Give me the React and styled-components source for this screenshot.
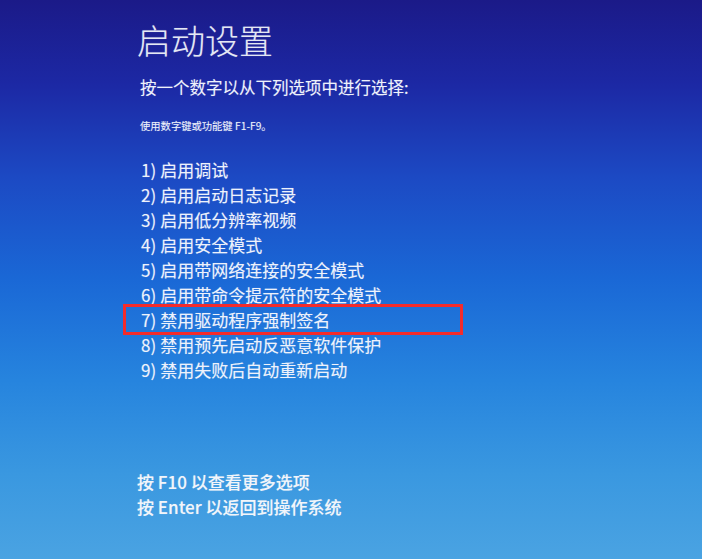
import React from "react";
import styled, { createGlobalStyle } from "styled-components";

const Global = createGlobalStyle`
  html, body { margin: 0; padding: 0; }
  body { font-family: "Noto Sans CJK SC", "Noto Sans", sans-serif; }
`;

const Screen = styled.div`
  width: 702px;
  height: 559px;
  box-sizing: border-box;
  padding: 20px 0 0 137px;
  display: flex;
  flex-direction: column;
  overflow: hidden;
  color: #eef2fb;
  background: linear-gradient(
    180deg,
    #1b1a88 0%,
    #1c28a4 15%,
    #1c4ac4 32%,
    #1a68d6 50%,
    #2684de 68%,
    #3a98e0 85%,
    #4aa3e2 100%
  );
  text-shadow: 0 0 1px rgba(255, 255, 255, 0.35);
`;

const Title = styled.h1`
  margin: 0;
  font-size: 34px;
  font-weight: 300;
  line-height: 40px;
  color: #e4e8f4;
`;

const Prompt = styled.p`
  margin: 15px 0 0 3px;
  font-size: 16.5px;
  font-weight: 400;
  line-height: 24px;
`;

const Hint = styled.p`
  margin: 19px 0 0 3px;
  font-size: 10.3px;
  line-height: 16px;
`;

const Options = styled.ol`
  list-style: none;
  margin: 23px 0 0 4px;
  padding: 0;
  display: flex;
  flex-direction: column;
`;

const Option = styled.li`
  font-size: 17px;
  line-height: 25px;
  white-space: nowrap;
  ${(p) =>
    p.$marked &&
    `
    margin: -3px 0 -3px -18px;
    padding-left: 15px;
    width: 319px;
    border: 3px solid #f42b2b;
  `}
`;

const Num = styled.span`
  margin-right: 4px;
`;

const Footer = styled.div`
  margin-top: 87px;
  display: flex;
  flex-direction: column;
`;

const FooterLine = styled.div`
  font-size: 17px;
  font-weight: 500;
  line-height: 25px;
  white-space: nowrap;
  color: #f2f5fa;
`;

const options = [
  "启用调试",
  "启用启动日志记录",
  "启用低分辨率视频",
  "启用安全模式",
  "启用带网络连接的安全模式",
  "启用带命令提示符的安全模式",
  "禁用驱动程序强制签名",
  "禁用预先启动反恶意软件保护",
  "禁用失败后自动重新启动",
];

export default function App() {
  return (
    <>
      <Global />
      <Screen>
        <Title>启动设置</Title>
        <Prompt>按一个数字以从下列选项中进行选择:</Prompt>
        <Hint>使用数字键或功能键 F1-F9。</Hint>
        <Options>
          {options.map((o, i) => (
            <Option key={i} $marked={i === 6}>
              <Num>{i + 1})</Num>
              {o}
            </Option>
          ))}
        </Options>
        <Footer>
          <FooterLine>按 F10 以查看更多选项</FooterLine>
          <FooterLine>按 Enter 以返回到操作系统</FooterLine>
        </Footer>
      </Screen>
    </>
  );
}
